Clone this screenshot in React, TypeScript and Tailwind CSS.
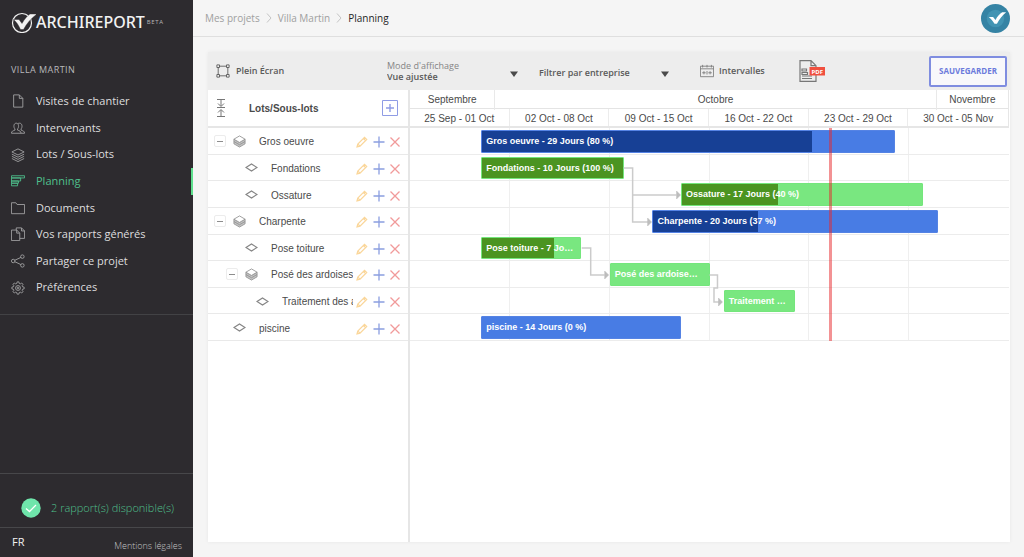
import { useState } from 'react'
import type { ReactNode } from 'react'

type Task = {
  name: string
  label: string
  level: 0 | 1 | 2
  group?: boolean
  color: 'blue' | 'green'
  start: number
  days: number
  progress: number
}

// start is counted in days from 25 Sep, the first day of the timeline
const TASKS: Task[] = [
  { name: 'Gros oeuvre', label: 'Gros oeuvre - 29 Jours (80 %)', level: 0, group: true, color: 'blue', start: 5, days: 29, progress: 80 },
  { name: 'Fondations', label: 'Fondations - 10 Jours (100 %)', level: 1, color: 'green', start: 5, days: 10, progress: 100 },
  { name: 'Ossature', label: 'Ossature - 17 Jours (40 %)', level: 1, color: 'green', start: 19, days: 17, progress: 40 },
  { name: 'Charpente', label: 'Charpente - 20 Jours (37 %)', level: 0, group: true, color: 'blue', start: 17, days: 20, progress: 37 },
  { name: 'Pose toiture', label: 'Pose toiture - 7 Jours (73 %)', level: 1, color: 'green', start: 5, days: 7, progress: 73 },
  { name: 'Posé des ardoises', label: 'Posé des ardoises - 7 Jours (0 %)', level: 1, group: true, color: 'green', start: 14, days: 7, progress: 0 },
  { name: 'Traitement des ardoises', label: 'Traitement des ardoises - 5 Jours (0 %)', level: 2, color: 'green', start: 22, days: 5, progress: 0 },
  { name: 'piscine', label: 'piscine - 14 Jours (0 %)', level: 0, color: 'blue', start: 5, days: 14, progress: 0 },
]

const WEEKS = ['25 Sep - 01 Oct', '02 Oct - 08 Oct', '09 Oct - 15 Oct', '16 Oct - 22 Oct', '23 Oct - 29 Oct', '30 Oct - 05 Nov']

const INDENT = ['pl-[6px]', 'pl-[18px]', 'pl-[29px]']

function Icon({ children, className }: { children: ReactNode; className: string }) {
  return (
    <svg viewBox="0 0 16 16" fill="none" stroke="currentColor" strokeWidth="1" className={className} aria-hidden="true">
      {children}
    </svg>
  )
}

const NAV: { label: string; icon: ReactNode }[] = [
  { label: 'Visites de chantier', icon: <path d="M3 1h6.500l4 4v10H3zM9.500 1v4h4" /> },
  {
    label: 'Intervenants',
    icon: (
      <path d="M.5 14c0-2.500 2-2.800 4-3.600V9C2.800 7.500 2.700 2.500 6 2.500S9.200 7.500 7.500 9v1.400c2 .8 4 1.100 4 3.600zM8 3c.5-.4 1-.5 1.800-.5 3.300 0 3.400 5 1.700 6.500v1.400c2 .8 4 1.100 4 3.600h-4" />
    ),
  },
  {
    label: 'Lots / Sous-lots',
    icon: <path d="M8 1 15 4.500 8 8 1 4.500zM1 7l7 3.500L15 7M1 9.500 8 13l7-3.500M1 12l7 3.500 7-3.500" />,
  },
  { label: 'Planning', icon: <path d="M.5 2h15v2.500H.5zM.5 4.500h10.500V8H.5zM.5 8h8v2.500h-8zM.5 10.500h7v3h-7z" /> },
  { label: 'Documents', icon: <path d="M.5 2h5l1.500 2h8.500v10.500H.5z" /> },
  {
    label: 'Vos rapports générés',
    icon: <path d="M6 3.500V1h6l3.500 3.500V13H10M12 1v3.500h3.500M.5 3.500h6L10 7v8.500H.5zM6.500 3.500V7H10" />,
  },
  {
    label: 'Partager ce projet',
    icon: (
      <>
        <circle cx="2.500" cy="8" r="2" />
        <circle cx="13" cy="3" r="2" />
        <circle cx="13" cy="13" r="2" />
        <path d="m4.300 7.200 7-3.300M4.300 8.800l7 3.300" />
      </>
    ),
  },
  {
    label: 'Préférences',
    icon: (
      <>
        <path d="M7 1h2l.4 1.800 1.200.5 1.600-1 1.500 1.500-1 1.600.5 1.200L15 7v2l-1.800.4-.5 1.200 1 1.600-1.500 1.500-1.600-1-1.200.5L9 15H7l-.4-1.800-1.200-.5-1.600 1-1.500-1.500 1-1.600-.5-1.200L1 9V7l1.800-.4.5-1.200-1-1.600 1.500-1.500 1.600 1 1.200-.5z" />
        <circle cx="8" cy="8" r="2.800" />
        <circle cx="8" cy="8" r="1" />
      </>
    ),
  },
]

function Logo() {
  return (
    <div className="flex h-[22px] items-center pl-[11px] text-[#f2f2f2]">
      <svg viewBox="0 0 25 22" className="h-[22px] w-[25px]" aria-hidden="true">
        <circle cx="11" cy="12" r="9.500" fill="none" stroke="currentColor" strokeWidth="1.200" />
        <path
          d="M2.500 8.500h5.500l3 4C13.500 8 16.500 4.500 19 3h7C20 7.500 16 12 12.500 18.500H9.500C7.500 14 5.500 11 2.500 8.500z"
          fill="currentColor"
          stroke="#2d2b2f"
          strokeWidth=".4"
        />
      </svg>
      <span className="font-['Noto_Sans'] text-[16px] leading-[22px] font-medium">ARCHIREPORT</span>
      <span className="pl-[2px] text-[6px] tracking-widest text-[#b5b5b7]">BETA</span>
    </div>
  )
}

function Sidebar() {
  return (
    <aside className="flex w-[193px] shrink-0 flex-col bg-[#2d2b2f] text-[#dededf]">
      <div className="pt-[11px]">
        <Logo />
      </div>
      <h2 className="pt-[30px] pl-[11px] text-[9px] leading-[14px] tracking-wider text-[#b9b9bb]">VILLA MARTIN</h2>
      <nav className="mt-[11px] grid h-[213px] grid-rows-8">
        {NAV.map((item) => {
          const active = item.label === 'Planning'
          return (
            <a
              key={item.label}
              href="#"
              className={`flex items-center gap-[11px] pl-[11px] text-[11px] ${active ? 'border-r-2 border-[#5fe08e] text-[#4fc08d]' : ''}`}
            >
              <Icon className={`h-[14px] w-[14px] ${active ? '' : 'text-[#a3a3a5]'}`}>{item.icon}</Icon>
              {item.label}
            </a>
          )
        })}
      </nav>
      <div className="mt-[13px] border-t border-[#424245]" />

      <div className="mt-auto flex h-[54px] items-end gap-[10px] border-t border-[#47474a] pb-[9px] pl-[21px] text-[11px] font-light text-[#4fc08d]">
        <svg viewBox="0 0 20 20" className="h-[20px] w-[20px]" aria-hidden="true">
          <circle cx="10" cy="10" r="9.700" fill="#6fe5ab" />
          <path d="m5 10.500 3.500 3 6.500-6.500" fill="none" stroke="#fff" strokeWidth="1.300" />
        </svg>
        <span className="leading-[20px]">2 rapport(s) disponible(s)</span>
      </div>
      <div className="flex h-[30px] items-center justify-between border-t border-[#47474a] pr-[11px] pl-[12px]">
        <span className="text-[11px] text-[#f2f2f2]">FR</span>
        <a href="#" className="pt-[6px] text-[9px] font-light text-[#c4c4c6]">
          Mentions légales
        </a>
      </div>
    </aside>
  )
}

function Chevron() {
  return (
    <svg viewBox="0 0 6 10" className="h-[10px] w-[6px]" fill="none" stroke="#c4c4c4" strokeWidth="1" aria-hidden="true">
      <path d="m1 .5 4 4.500-4 4.500" />
    </svg>
  )
}

function TopBar() {
  return (
    <header className="flex h-[37px] items-center justify-between border-b border-[#dfdfdf] pr-[14px] pl-[12px]">
      <nav className="flex items-center gap-[6px] text-[10px] text-[#a0a0a0]">
        <a href="#">Mes projets</a>
        <Chevron />
        <a href="#">Villa Martin</a>
        <Chevron />
        <span className="text-[#1f1f1f]">Planning</span>
      </nav>
      <button type="button" aria-label="Mon compte">
        <svg viewBox="0 0 30 30" className="h-[29px] w-[29px]" aria-hidden="true">
          <circle cx="15" cy="15" r="15" fill="#3583a4" />
          <circle cx="15" cy="15" r="9" fill="#4294b3" />
          <path d="M8 13.500h4.500l2.500 3C17 12.500 19.500 10 22 8.500h4C22 12 19 15.500 16.500 20.500h-2.500C12 17.500 10.500 15.500 8 13.500z" fill="#fff" />
        </svg>
      </button>
    </header>
  )
}

function Caret() {
  return (
    <svg viewBox="0 0 8 6" className="pointer-events-none absolute right-0 bottom-[9px] h-[6px] w-[8px]" aria-hidden="true">
      <path d="M0 .5h8L4 6z" fill="#4a4a4a" />
    </svg>
  )
}

function Toolbar() {
  return (
    <div className="flex h-[38px] items-center bg-[#ededed] text-[9px] font-semibold text-[#5a5a5a]">
      <button type="button" className="flex w-[179px] items-center gap-[6px] pl-[8px]">
        <Icon className="h-[14px] w-[14px]">
          <path d="M3.500 2.500h9M3.500 13.500h9M2.500 3.500v9M13.500 3.500v9" />
          <path d="M1 1h3v3H1zM12 1h3v3h-3zM1 12h3v3H1zM12 12h3v3h-3z" />
        </Icon>
        Plein Écran
      </button>
      <div className="relative flex h-[30px] w-[131px] flex-col justify-center">
        <label htmlFor="mode" className="leading-[10px] font-normal text-[#858585]">
          Mode d'affichage
        </label>
        <select id="mode" className="w-full appearance-none leading-[11px]">
          <option>Vue ajustée</option>
          <option>Vue par semaine</option>
        </select>
        <Caret />
      </div>
      <div className="relative ml-[21px] flex h-[30px] w-[130px] items-center">
        <select aria-label="Filtrer par entreprise" className="w-full appearance-none pt-[4px]">
          <option>Filtrer par entreprise</option>
        </select>
        <Caret />
      </div>
      <button type="button" className="ml-[31px] flex w-[66px] items-center gap-[5px]">
        <Icon className="h-[14px] w-[14px] text-[#7c7c7c]">
          <path d="M.5 2.500h15v12H.5zM.5 5.500h15M3 1v3M8 1v3M13 1v3M2.500 10h4M4.500 8.200v3.600M13.500 10h-4M11.500 8.200v3.600M8 8v4" />
        </Icon>
        Intervalles
      </button>
      <button type="button" aria-label="Exporter en PDF" className="ml-[33px]">
        <svg viewBox="0 0 26 22" className="h-[22px] w-[26px]" aria-hidden="true">
          <path d="M1 .7h11l5 5v15.600H1zM12 .7v5h5" fill="none" stroke="#777" strokeWidth="1.200" />
          <path d="M3 9h4.500v2H3zM3 12.500h5.500v2H3zM3 16h10M3 18.500h10" fill="none" stroke="#777" strokeWidth="1.200" />
          <path d="M10.500 7h15.500v8.500H10.500z" fill="#f0503f" />
          <text x="18.300" y="13.500" textAnchor="middle" fontSize="6" fontWeight="700" fill="#fff">
            PDF
          </text>
        </svg>
      </button>
      <button
        type="button"
        className="mr-[3px] ml-auto h-[31px] w-[78px] rounded-[2px] border-2 border-[#7f8de0] bg-[#f8f8fb] text-[8px] font-bold text-[#6c7bdc]"
      >
        SAUVEGARDER
      </button>
    </div>
  )
}

function TaskRow({ task }: { task: Task }) {
  const [open, setOpen] = useState(true)

  return (
    <div className={`flex min-h-0 items-center border-b border-[#e9e9e9] pt-px pr-[5px] ${INDENT[task.level]}`}>
      {task.group ? (
        <button
          type="button"
          aria-label={open ? 'Réduire' : 'Développer'}
          onClick={() => setOpen(!open)}
          className="flex h-[12px] w-[12px] shrink-0 items-center justify-center rounded-[2px] border border-[#ececec]"
        >
          <span className="h-px w-[6px] bg-[#8d8d8d]" />
        </button>
      ) : (
        <span className="w-[12px] shrink-0" />
      )}
      {task.group ? (
        <svg viewBox="0 0 14 14" className="ml-[7px] h-[13px] w-[13px] shrink-0" fill="none" stroke="#8f8f8f" strokeWidth=".9" aria-hidden="true">
          <path d="M1 4.500v5L7 13l6-3.500v-5L7 8z" fill="#c4c4c4" />
          <path d="M7 1 13 4.500 7 8 1 4.500z" fill="#fff" />
          <path d="m1 7 6 3.500L13 7" />
        </svg>
      ) : (
        <svg viewBox="0 0 13 13" className="ml-[7px] h-[13px] w-[13px] shrink-0" fill="none" stroke="#858585" strokeWidth="1.200" aria-hidden="true">
          <path d="M1 6.500 6.500 3 12 6.500 6.500 10z" />
        </svg>
      )}
      <span className="ml-[13px] min-w-0 flex-1 overflow-hidden pt-px whitespace-nowrap">{task.name}</span>
      <div className="ml-px flex shrink-0 pt-[2px]">
        <button type="button" aria-label={`Modifier ${task.name}`} className="flex w-[16px] justify-center">
          <svg viewBox="0 0 12 12" className="h-[12px] w-[12px]" fill="none" stroke="#fad699" strokeWidth="1.200" aria-hidden="true">
            <path d="m1 11 .8-3L8.500 1.300l2.200 2.200L4 10.200zM7.300 2.500l2.200 2.200M1.800 8 4 10.200" />
          </svg>
        </button>
        <button type="button" aria-label={`Ajouter sous ${task.name}`} className="flex w-[17px] justify-center">
          <svg viewBox="0 0 12 12" className="h-[12px] w-[12px]" stroke="#8b9ee0" strokeWidth="1.300" aria-hidden="true">
            <path d="M6 .5v11M.5 6h11" />
          </svg>
        </button>
        <button type="button" aria-label={`Supprimer ${task.name}`} className="flex w-[16px] justify-center">
          <svg viewBox="0 0 12 12" className="h-[12px] w-[12px]" stroke="#f19a9a" strokeWidth="1.300" aria-hidden="true">
            <path d="m1.500 1.500 9 9M10.500 1.500l-9 9" />
          </svg>
        </button>
      </div>
    </div>
  )
}

function TaskList() {
  return (
    <div className="w-[202px] shrink-0 border-r-2 border-[#e6e6e6]">
      <div className="flex h-[38px] items-center border-b-2 border-[#e6e6e6] pr-[9px] pl-[7px]">
        <button type="button" aria-label="Tout réduire">
          <svg viewBox="0 0 12 18" className="h-[18px] w-[12px]" fill="none" stroke="#777" aria-hidden="true">
            <path d="M2 .5h8M6 1v6M3 4.500 6 7.500l3-3M2 17.500h8M6 17v-6M3 13.500l3-3 3 3M2 8.500h8" />
          </svg>
        </button>
        <span className="ml-[22px] font-bold">Lots/Sous-lots</span>
        <button type="button" aria-label="Ajouter un lot" className="ml-auto">
          <svg viewBox="0 0 18 18" className="h-[18px] w-[18px]" fill="none" stroke="#8f9ce5" aria-hidden="true">
            <path d="M1.500 1.500h15v15h-15z" />
            <path d="M9 5v8M5 9h8" strokeWidth="1.400" />
          </svg>
        </button>
      </div>
      <div className="grid h-[213px] grid-cols-1 grid-rows-8">
        {TASKS.map((task) => (
          <TaskRow key={task.name} task={task} />
        ))}
      </div>
    </div>
  )
}

function Bar({ task }: { task: Task }) {
  const blue = task.color === 'blue'
  return (
    <div
      className={`relative mt-[2px] mb-px flex min-w-0 items-center rounded-[1px] border ${
        blue ? 'border-[#5583e4] bg-[#487ce4]' : 'border-[#74e67c] bg-[#79e780]'
      }`}
      style={{ gridColumn: `${task.start + 1} / span ${task.days}` }}
    >
      <div className={`absolute inset-y-0 left-0 ${blue ? 'bg-[#174095]' : 'bg-[#4b9421]'}`} style={{ width: `${task.progress}%` }} />
      <span className="relative truncate pt-px pr-[6px] pl-[4px] text-[9px] font-bold text-white">{task.label}</span>
    </div>
  )
}

// Dependency arrows, on a 600 x 213 canvas stretched over the rows
function Links() {
  return (
    <svg viewBox="0 0 600 213" preserveAspectRatio="none" className="absolute inset-0 h-full w-full" aria-hidden="true">
      <g fill="none" stroke="#cbcbcb" strokeWidth="1.500">
        <path d="M214 40h9v54h16M223 67h44" />
        <path d="M172 120h9v27h14" />
        <path d="M300 147h8v13h-3.500v14h5" />
      </g>
      <path d="m267 63 4 4-4 4zM238 90l4 4-4 4zM195 143l4 4-4 4zM309 170l4 4-4 4z" fill="#bdbdbd" stroke="#bdbdbd" strokeWidth=".5" />
    </svg>
  )
}

function Timeline() {
  return (
    <div className="min-w-0 flex-1">
      <div className="h-[38px] border-r border-b-2 border-[#e6e6e6] text-center">
        <div className="grid h-[19px] grid-cols-[repeat(42,minmax(0,1fr))] border-b border-[#e4e4e4] leading-[20px]">
          <span className="col-span-6 border-r border-[#e9e9e9]">Septembre</span>
          <span className="col-[span_31/span_31] border-r border-[#e9e9e9]">Octobre</span>
          <span className="col-span-5">Novembre</span>
        </div>
        <div className="grid h-[17px] grid-cols-6 leading-[20px]">
          {WEEKS.map((week) => (
            <span key={week} className="h-[17px] border-r border-[#ececec] last:border-r-0">
              {week}
            </span>
          ))}
        </div>
      </div>
      <div className="relative h-[213px]">
        <div className="absolute inset-0 grid grid-cols-6">
          {WEEKS.map((week) => (
            <div key={week} className="border-r border-[#efefef] last:border-r-0" />
          ))}
        </div>
        <div className="relative grid h-full grid-rows-8">
          {TASKS.map((task) => (
            <div key={task.name} className="grid min-h-0 grid-cols-[repeat(42,minmax(0,1fr))] border-b border-[#ececec]">
              <Bar task={task} />
            </div>
          ))}
        </div>
        <Links />
        <div className="absolute inset-y-0 w-[3px] bg-[#e8252a]/50" style={{ left: `${(29.4 / 42) * 100}%` }} title="Aujourd'hui" />
      </div>
    </div>
  )
}

export default function App() {
  return (
    <div className="flex min-h-screen bg-[#f5f5f5] font-['Open_Sans',sans-serif]">
      <Sidebar />
      <div className="flex min-w-0 flex-1 flex-col">
        <TopBar />
        <main className="mt-[15px] mr-[14px] mb-[15px] ml-[15px] flex flex-1 flex-col bg-white shadow-[0_0_4px_rgba(0,0,0,0.06)]">
          <Toolbar />
          <div className="flex flex-1 pr-px font-['Liberation_Sans',sans-serif] text-[10px] text-[#4a4a4a]">
            <TaskList />
            <Timeline />
          </div>
        </main>
      </div>
    </div>
  )
}
